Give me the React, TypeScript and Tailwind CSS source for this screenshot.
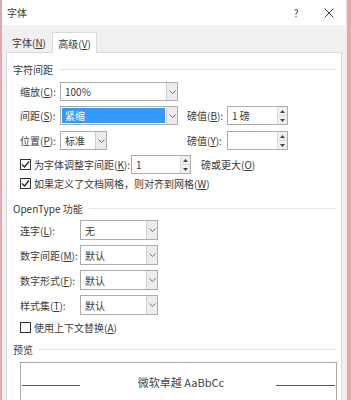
import React from 'react';

const font = "font-['Segoe_UI','Noto_Sans_CJK_SC',sans-serif]";

function Chevron() {
  return (
    <svg width="7" height="4" viewBox="0 0 7 4">
      <path d="M0.5 0.5 L3.5 3.5 L6.5 0.5" fill="none" stroke="#6f6f6f" strokeWidth="1" />
    </svg>
  );
}

function Select({ className, value, selected }: { className: string; value: string; selected?: boolean }) {
  return (
    <div className={`flex border border-[#acacac] bg-white ${className}`}>
      {selected ? (
        <div className="flex-1 m-px flex items-center pl-[3px] bg-[#3399ff] text-white">{value}</div>
      ) : (
        <div className="flex-1 flex items-center pl-[4px]">{value}</div>
      )}
      <div className="w-[11px] flex items-center justify-center border-l border-[#cfcfcf] bg-[#ececec]">
        <Chevron />
      </div>
    </div>
  );
}

function Spin({ className, value }: { className: string; value: string }) {
  return (
    <div className={`flex border border-[#acacac] bg-white ${className}`}>
      <div className="flex-1 flex items-center pl-[4px]">{value}</div>
      <div className="w-[10px] flex flex-col border-l border-[#dcdcdc] bg-[#f0f0f0]">
        <div className="flex-1 flex items-center justify-center">
          <svg width="5" height="3" viewBox="0 0 5 3"><path d="M0 3 L2.5 0 L5 3 Z" fill="#444" /></svg>
        </div>
        <div className="flex-1 flex items-center justify-center border-t border-[#dcdcdc]">
          <svg width="5" height="3" viewBox="0 0 5 3"><path d="M0 0 L2.5 3 L5 0 Z" fill="#444" /></svg>
        </div>
      </div>
    </div>
  );
}

function Check({ checked }: { checked?: boolean }) {
  return (
    <div className="w-[11px] h-[11px] shrink-0 border border-[#333] bg-white flex items-center justify-center mr-[3px]">
      {checked && (
        <svg width="9" height="9" viewBox="0 0 9 9">
          <path d="M1 4.5 L3.5 7 L8 1.5" fill="none" stroke="#222" strokeWidth="1.2" />
        </svg>
      )}
    </div>
  );
}

function Header({ label }: { label: React.ReactNode }) {
  return (
    <div className="flex items-center h-[14px] pr-[5px]">
      <span>{label}</span>
      <div className="flex-1 h-px bg-[#e3e3e3] ml-[6px]" />
    </div>
  );
}

export default function App() {
  return (
    <div className={`w-[351px] h-[400px] overflow-hidden bg-[#e2a7ad] pl-[2px] text-[10px] text-[#3a3a3a] ${font}`}>
      <div className="w-[345px] h-full flex flex-col bg-[#f0f0f0] border-r border-[#f3e9ea]">
        {/* Title bar */}
        <div className="h-[25px] shrink-0 flex items-center bg-white pl-[5px] pr-[2px]">
          <span>字体</span>
          <span className="ml-auto w-[30px] mr-[3px] text-center">?</span>
          <span className="w-[30px] flex justify-center">
            <svg width="10" height="10" viewBox="0 0 10 10">
              <path d="M0.5 0.5 L9.5 9.5 M9.5 0.5 L0.5 9.5" stroke="#444" strokeWidth="1" />
            </svg>
          </span>
        </div>

        {/* Tabs */}
        <div className="h-[27px] shrink-0 flex items-end pl-[4px]">
          <div className="w-[46px] h-[20px] flex items-center justify-center">
            字体(<u>N</u>)
          </div>
          <div className="relative z-10 -mb-px w-[45px] h-[21px] flex items-center justify-center bg-white border border-b-0 border-[#d9d9d9]">
            高级(<u>V</u>)
          </div>
        </div>

        {/* Panel */}
        <div className="flex-1 mx-[4px] bg-white border border-[#d9d9d9] pt-[9px] pl-[6px] flex flex-col whitespace-nowrap">
          <Header label="字符间距" />

          <div className="flex items-center h-[19px] mt-[6px] pl-[7px]">
            <span className="w-[40px]">缩放(<u>C</u>):</span>
            <Select className="w-[118px] h-[19px]" value="100%" />
          </div>

          <div className="flex items-center h-[19px] mt-[5px] pl-[7px]">
            <span className="w-[40px]">间距(<u>S</u>):</span>
            <Select className="w-[118px] h-[19px]" value="紧缩" selected />
            <span className="w-[40px] ml-[9px]">磅值(<u>B</u>):</span>
            <Spin className="w-[61px] h-[19px]" value="1 磅" />
          </div>

          <div className="flex items-center h-[19px] mt-[6px] pl-[7px]">
            <span className="w-[40px]">位置(<u>P</u>):</span>
            <div className="w-[118px]">
              <Select className="w-[47px] h-[19px]" value="标准" />
            </div>
            <span className="w-[40px] ml-[9px]">磅值(<u>Y</u>):</span>
            <Spin className="w-[61px] h-[19px]" value="" />
          </div>

          <div className="flex items-center h-[19px] mt-[5px] pl-[7px]">
            <Check checked />
            <span className="mr-px">为字体调整字间距(<u>K</u>):</span>
            <Spin className="w-[60px] h-[19px]" value="1" />
            <span className="ml-[10px]">磅或更大(<u>O</u>)</span>
          </div>

          <div className="flex items-center h-[16px] mt-px pl-[7px]">
            <Check checked />
            <span>如果定义了文档网格，则对齐到网格(<u>W</u>)</span>
          </div>

          <div className="mt-[10px]">
            <Header label="OpenType 功能" />
          </div>

          <div className="flex items-center h-[20px] mt-[5px] pl-[7px]">
            <span className="w-[60px]">连字(<u>L</u>):</span>
            <Select className="w-[78px] h-[20px]" value="无" />
          </div>
          <div className="flex items-center h-[20px] mt-[5px] pl-[7px]">
            <span className="w-[60px]">数字间距(<u>M</u>):</span>
            <Select className="w-[78px] h-[20px]" value="默认" />
          </div>
          <div className="flex items-center h-[20px] mt-[5px] pl-[7px]">
            <span className="w-[60px]">数字形式(<u>F</u>):</span>
            <Select className="w-[78px] h-[20px]" value="默认" />
          </div>
          <div className="flex items-center h-[20px] mt-[5px] pl-[7px]">
            <span className="w-[60px]">样式集(<u>T</u>):</span>
            <Select className="w-[78px] h-[20px]" value="默认" />
          </div>

          <div className="flex items-center h-[16px] mt-[4px] pl-[7px]">
            <Check />
            <span>使用上下文替换(<u>A</u>)</span>
          </div>

          <div className="mt-[7px]">
            <Header label="预览" />
          </div>

          {/* Preview */}
          <div className="ml-[7px] mr-[4px] mt-[6px] h-[60px] shrink-0 border border-[#a8a8a8]">
            <div className="flex items-center h-[39px]">
              <div className="w-[58px] h-px bg-[#555] mt-[6px] ml-px" />
              <div className="flex-1 flex justify-center pl-[6px] text-[11px] text-[#444]">微软卓越 AaBbCc</div>
              <div className="w-[59px] h-px bg-[#555] mt-[6px] mr-px" />
            </div>
          </div>
        </div>
      </div>
    </div>
  );
}
